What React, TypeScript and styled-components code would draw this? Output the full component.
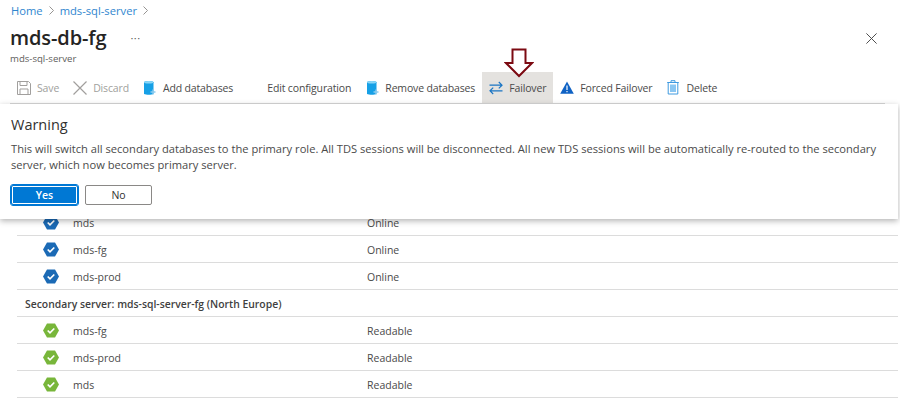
import React from "react";
import styled, { createGlobalStyle } from "styled-components";

const Global = createGlobalStyle`
  html, body { margin: 0; padding: 0; background: #fff; }
  body { font-family: "Open Sans", "Noto Sans", sans-serif; color: #323130; }
`;

const Page = styled.div`
  width: 900px;
  height: 406px;
  overflow: hidden;
  position: relative;
  background: #fff;
`;
const Crumbs = styled.nav`
  display: flex;
  align-items: center;
  gap: 6px;
  height: 20px;
  padding-left: 11px;
  font-size: 11.2px;
  color: #2f86cf;
`;
const Chevron = styled.svg`
  flex: none;
`;
const TitleRow = styled.div`
  display: flex;
  align-items: center;
  height: 30px;
  padding: 5px 23px 0 10px;
  box-sizing: border-box;
`;
const Title = styled.h1`
  margin: 0;
  font-size: 20px;
  font-weight: 600;
  color: #252423;
  letter-spacing: -0.1px;
`;
const More = styled.span`
  margin-left: 24px;
  margin-top: 0;
  font-size: 11px;
  letter-spacing: 0.5px;
  color: #605e5c;
`;
const Close = styled.span`
  margin-left: auto;
  margin-top: 2px;
  display: flex;
`;
const Subtitle = styled.div`
  height: 22px;
  padding-left: 10px;
  font-size: 9.6px;
  line-height: 18px;
  color: #605e5c;
`;
const Toolbar = styled.div`
  display: flex;
  align-items: stretch;
  height: 31px;
  margin: 0 15px 0 10px;
  border-bottom: 1px solid #d8d8d8;
`;
const ToolItem = styled.div<{ $active?: boolean; $disabled?: boolean }>`
  display: flex;
  align-items: center;
  gap: 6px;
  padding: 0 7px;
  font-size: 10.5px;
  letter-spacing: -0.15px;
  white-space: nowrap;
  background: ${(p) => (p.$active ? "#e4e2df" : "transparent")};
  color: ${(p) => (p.$disabled ? "#a19f9d" : "#4a4a4a")};
`;
const IconSlot = styled.span`
  display: flex;
  width: 14px;
  height: 16px;
  align-items: center;
  justify-content: center;
  flex: none;
`;
const ArrowMark = styled.svg`
  position: absolute;
  left: 504px;
  top: 48px;
`;
const Content = styled.div`
  position: relative;
`;
const WarningPanel = styled.section`
  position: absolute;
  left: 0;
  top: 0;
  width: 898px;
  height: 115px;
  box-sizing: border-box;
  padding: 12px 11px 0;
  background: #fff;
  box-shadow: 0 2px 6px rgba(0, 0, 0, 0.3);
  z-index: 1;
`;
const WarningTitle = styled.h2`
  margin: 0 0 7px;
  font-size: 14.5px;
  line-height: 18px;
  font-weight: 400;
  color: #323130;
`;
const WarningText = styled.p`
  margin: 0 0 12px;
  font-size: 11.15px;
  line-height: 16px;
  color: #4a4a4a;
`;
const Buttons = styled.div`
  display: flex;
  gap: 7px;
`;
const Button = styled.button<{ $primary?: boolean }>`
  width: 67px;
  height: 20px;
  padding: 0;
  font: 600 10.5px "Open Sans", sans-serif;
  border-radius: 2px;
  border: 1px solid ${(p) => (p.$primary ? "#0078d4" : "#8a8886")};
  background: ${(p) => (p.$primary ? "#0078d4" : "#fff")};
  color: ${(p) => (p.$primary ? "#fff" : "#323130")};
  font-weight: ${(p) => (p.$primary ? 600 : 400)};
  box-shadow: ${(p) => (p.$primary ? "inset 0 0 0 1px #fff" : "none")};
  outline: ${(p) => (p.$primary ? "1px solid #0078d4" : "none")};
`;
const List = styled.div`
  margin-left: 17px;
  margin-right: 2px;
  padding-top: 105px;
`;
const Row = styled.div`
  display: flex;
  align-items: center;
  height: 27px;
  padding-top: 1px;
  box-sizing: border-box;
  border-bottom: 1px solid #dcdcdc;
  font-size: 10.5px;
  color: #4a4a4a;
`;
const StatusIcon = styled.span`
  display: flex;
  margin-left: 26px;
  width: 16px;
  flex: none;
`;
const Name = styled.span`
  margin-left: 14px;
  width: 294px;
  flex: none;
`;
const GroupRow = styled(Row)`
  padding-left: 8px;
  font-weight: 600;
  font-size: 10.4px;
  color: #3f3f3f;
`;

const SaveIcon = () => (
  <svg width="14" height="14" viewBox="0 0 14 14" fill="none" stroke="#a19f9d" strokeWidth="1">
    <path d="M.5.5h11l2 2v11H.5z" />
    <path d="M3 .5v4h7v-4M3 13.500V8h8v5.500" />
  </svg>
);
const XIcon = ({ size, color }: { size: number; color: string }) => (
  <svg width={size} height={size} viewBox="0 0 14 14" fill="none" stroke={color} strokeWidth="1.200">
    <path d="M.5.5l13 13M13.500.5l-13 13" />
  </svg>
);
const DbIcon = () => (
  <svg width="13" height="15" viewBox="0 0 13 15">
    <path d="M1 2.200C1 .7 10.500.7 10.500 2.200V14c-2 1-7.500 1-9.500 0z" fill="#16a0e6" />
    <ellipse cx="5.750" cy="2.200" rx="4.700" ry="1.300" fill="#8ad6f7" />
    <path d="M9.300 9.500h1.400v1.800h1.800v1.400h-1.800v1.800H9.300v-1.800H7.500v-1.400h1.800z" fill="#8ccbee" />
  </svg>
);
const SwapIcon = () => (
  <svg width="14" height="14" viewBox="0 0 14 14" fill="none" stroke="#1a75c4" strokeWidth="1.200">
    <path d="M.5 4.200h12.500M9.800 1l3.200 3.200-3.200 3.200M13.500 9.800H1M4.200 6.600L1 9.800 4.200 13" />
  </svg>
);
const TriangleIcon = () => (
  <svg width="14" height="13" viewBox="0 0 14 13">
    <path d="M7 .5L13.800 12.800H.2z" fill="#0f62c4" />
    <path d="M6.400 4.500h1.200v4.500H6.400zM6.400 10h1.200v1.300H6.400z" fill="#fff" />
  </svg>
);
const TrashIcon = () => (
  <svg width="12" height="15" viewBox="0 0 12 15" fill="none">
    <path d="M1.200 2.500h9.600V14H1.200z" fill="#fff" stroke="#3f9ae0" />
    <path d="M.2 2.500h11.600M4 2.500V.7h4v1.800" stroke="#3f9ae0" />
    <path d="M3 4.500h6v7.500H3z" fill="#8ac6f2" />
  </svg>
);
const HexCheck = ({ color }: { color: string }) => (
  <svg width="16" height="15" viewBox="0 0 16 15">
    <path d="M4 .5h8l4 7-4 7H4l-4-7z" fill={color} />
    <path d="M4.700 7.500l2.300 2.300 4.300-4.300" fill="none" stroke="#fff" strokeWidth="1.700" />
  </svg>
);
const CrumbChevron = () => (
  <Chevron width="5" height="9" viewBox="0 0 5 9" fill="none" stroke="#8a8886" strokeWidth="0.9">
    <path d="M.5.5l4 4-4 4" />
  </Chevron>
);

const primary = [
  ["mds", "Online"],
  ["mds-fg", "Online"],
  ["mds-prod", "Online"],
];
const secondary = [
  ["mds-fg", "Readable"],
  ["mds-prod", "Readable"],
  ["mds", "Readable"],
];

const DbRow = ({ name, status, color }: { name: string; status: string; color: string }) => (
  <Row>
    <StatusIcon>
      <HexCheck color={color} />
    </StatusIcon>
    <Name>{name}</Name>
    <span>{status}</span>
  </Row>
);

export default function App() {
  return (
    <Page>
      <Global />
      <Crumbs>
        <span>Home</span>
        <CrumbChevron />
        <span>mds-sql-server</span>
        <CrumbChevron />
      </Crumbs>
      <TitleRow>
        <Title>mds-db-fg</Title>
        <More>···</More>
        <Close>
          <XIcon size={11} color="#444" />
        </Close>
      </TitleRow>
      <Subtitle>mds-sql-server</Subtitle>
      <Toolbar>
        <ToolItem $disabled>
          <IconSlot><SaveIcon /></IconSlot>Save
        </ToolItem>
        <ToolItem $disabled>
          <IconSlot><XIcon size={14} color="#a19f9d" /></IconSlot>Discard
        </ToolItem>
        <ToolItem>
          <IconSlot><DbIcon /></IconSlot>Add databases
        </ToolItem>
        <ToolItem>
          <IconSlot />Edit configuration
        </ToolItem>
        <ToolItem>
          <IconSlot><DbIcon /></IconSlot>Remove databases
        </ToolItem>
        <ToolItem $active>
          <IconSlot><SwapIcon /></IconSlot>Failover
        </ToolItem>
        <ToolItem>
          <IconSlot><TriangleIcon /></IconSlot>Forced Failover
        </ToolItem>
        <ToolItem>
          <IconSlot><TrashIcon /></IconSlot>Delete
        </ToolItem>
      </Toolbar>
      <ArrowMark width="30" height="30" viewBox="0 0 30 30" fill="#fff" stroke="#7c0a12" strokeWidth="2">
        <path d="M8.500 1.500h13V15H28L15 28 2 15h6.500z" />
      </ArrowMark>
      <Content>
        <WarningPanel>
          <WarningTitle>Warning</WarningTitle>
          <WarningText>
            This will switch all secondary databases to the primary role. All TDS sessions will be disconnected. All new TDS sessions will be automatically re-routed to the secondary server, which now becomes primary server.
          </WarningText>
          <Buttons>
            <Button $primary>Yes</Button>
            <Button>No</Button>
          </Buttons>
        </WarningPanel>
        <List>
          {primary.map(([n, s]) => (
            <DbRow key={n} name={n} status={s} color="#1b6ab5" />
          ))}
          <GroupRow>Secondary server: mds-sql-server-fg (North Europe)</GroupRow>
          {secondary.map(([n, s]) => (
            <DbRow key={n} name={n} status={s} color="#78b63a" />
          ))}
        </List>
      </Content>
    </Page>
  );
}
